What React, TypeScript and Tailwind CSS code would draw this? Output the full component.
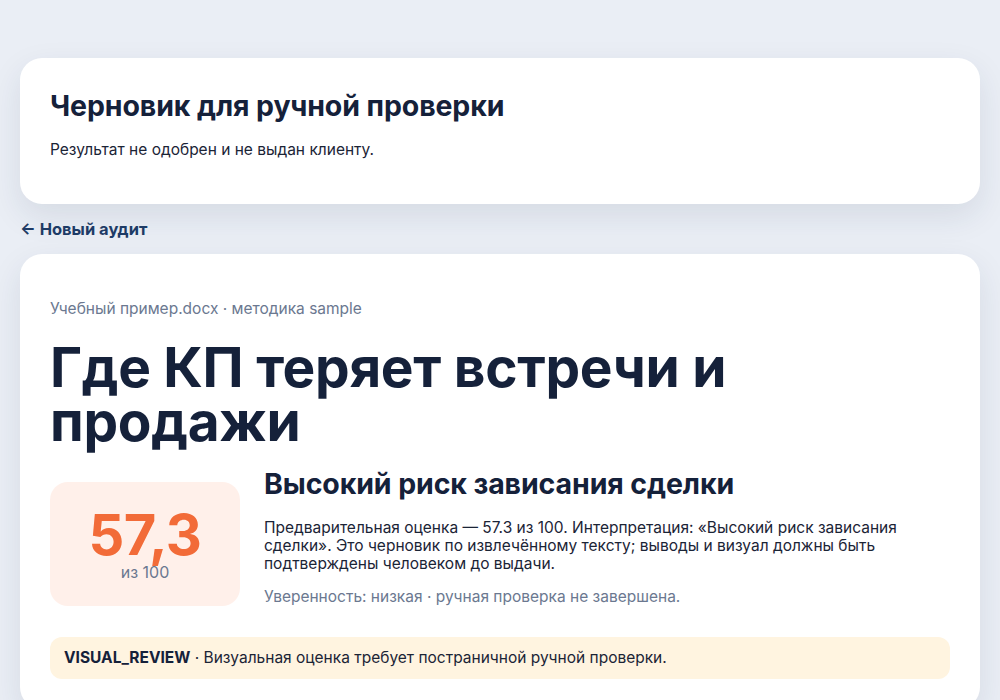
import React from "react";

export default function App() {
  return (
    <div
      className="min-h-[700px] bg-[#eaeef5] px-5 pt-[58px] pb-10 text-[#15213a]"
      style={{ fontFamily: "Inter, 'Noto Sans', sans-serif" }}
    >
      <div className="rounded-[22px] bg-white px-[30px] pt-[31px] pb-[44px] shadow-[0_12px_32px_rgba(30,45,80,0.10)]">
        <h2 className="text-[28.5px] font-bold leading-[34px] tracking-[-0.1px] text-[#15213a]">
          Черновик для ручной проверки
        </h2>
        <p className="mt-[17px] text-[15.5px] leading-[20px] text-[#1b2436]">
          Результат не одобрен и не выдан клиенту.
        </p>
      </div>

      <div className="my-[15px] text-[16.5px] font-bold leading-[20px] text-[#1d3b66]">
        <span>← Новый аудит</span>
      </div>

      <div className="rounded-[22px] bg-white px-[30px] pt-[45px] pb-[30px] shadow-[0_12px_32px_rgba(30,45,80,0.10)]">
        <div className="text-[15.5px] leading-[20px] text-[#6b7890]">
          Учебный пример.docx · методика sample
        </div>
        <h1 className="mt-[21px] max-w-[760px] text-[55px] font-bold leading-[54px] tracking-[-0.3px] text-[#15213a]">
          Где КП теряет встречи и продажи
        </h1>
        <div className="mt-[19px] flex items-start gap-6">
          <div className="mt-[15px] flex h-[124px] w-[190px] shrink-0 flex-col items-center justify-center rounded-[18px] bg-[#fff0ea]">
            <div className="text-[56px] font-bold leading-[56px] tracking-[-0.5px] text-[#f26b38]">
              57,3
            </div>
            <div className="text-[16px] leading-[18px] text-[#6b7890]">из 100</div>
          </div>
          <div className="flex-1">
            <h3 className="text-[28.5px] font-bold leading-[34px] tracking-[-0.1px] text-[#15213a]">
              Высокий риск зависания сделки
            </h3>
            <p className="mt-[18px] text-[15.5px] leading-[18px] text-[#1b2436]">
              Предварительная оценка — 57.3 из 100. Интерпретация: «Высокий риск зависания
              сделки». Это черновик по извлечённому тексту; выводы и визуал должны быть
              подтверждены человеком до выдачи.
            </p>
            <p className="mt-[14px] text-[15.5px] leading-[20px] text-[#6b7890]">
              Уверенность: низкая · ручная проверка не завершена.
            </p>
          </div>
        </div>
        <div className="mt-[30px] rounded-[12px] bg-[#fff4e0] px-[14px] py-[11px] text-[15.5px] leading-[20px] text-[#1b2436]">
          <span className="font-bold text-[#15213a]">VISUAL_REVIEW</span> · Визуальная оценка
          требует постраничной ручной проверки.
        </div>
      </div>
    </div>
  );
}
